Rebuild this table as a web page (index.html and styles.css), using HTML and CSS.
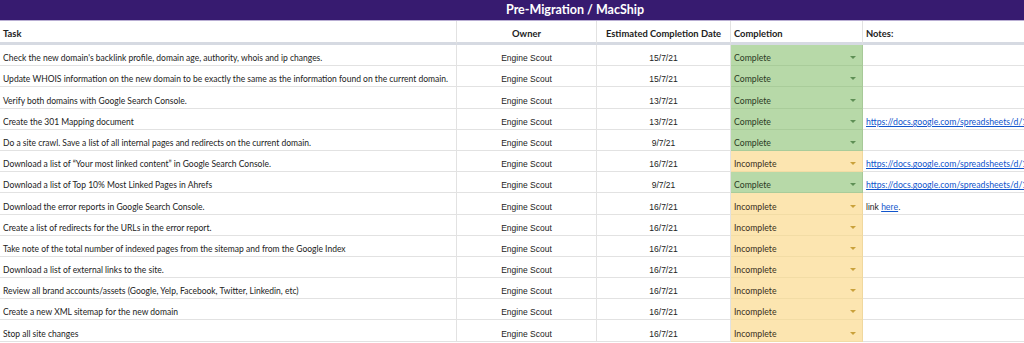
FILE: index.html
```html
<!DOCTYPE html>
<html>
<head>
<meta charset="utf-8">
<link rel="stylesheet" href="styles.css">
</head>
<body>
<div class="sheet">
  <div class="title">Pre-Migration / MacShip</div>
  <div class="grid">
    <div class="hd task">Task</div>
    <div class="hd center">Owner</div>
    <div class="hd center">Estimated Completion Date</div>
    <div class="hd">Completion</div>
    <div class="hd note">Notes:</div>

    <div class="c task">Check the new domain's backlink profile, domain age, authority, whois and ip changes.</div>
    <div class="c center ar">Engine Scout</div><div class="c center ar">15/7/21</div>
    <div class="c st ok">Complete<span class="dd"></span></div><div class="c note"></div>

    <div class="c task">Update WHOIS information on the new domain to be exactly the same as the information found on the current domain.</div>
    <div class="c center ar">Engine Scout</div><div class="c center ar">15/7/21</div>
    <div class="c st ok">Complete<span class="dd"></span></div><div class="c note"></div>

    <div class="c task">Verify both domains with Google Search Console.</div>
    <div class="c center ar">Engine Scout</div><div class="c center ar">13/7/21</div>
    <div class="c st ok">Complete<span class="dd"></span></div><div class="c note"></div>

    <div class="c task">Create the 301 Mapping document</div>
    <div class="c center ar">Engine Scout</div><div class="c center ar">13/7/21</div>
    <div class="c st ok">Complete<span class="dd"></span></div><div class="c note"><a href="#">https://docs.google.com/spreadsheets/d/1</a></div>

    <div class="c task">Do a site crawl. Save a list of all internal pages and redirects on the current domain.</div>
    <div class="c center ar">Engine Scout</div><div class="c center ar">9/7/21</div>
    <div class="c st ok">Complete<span class="dd"></span></div><div class="c note"></div>

    <div class="c task">Download a list of “Your most linked content” in Google Search Console.</div>
    <div class="c center ar">Engine Scout</div><div class="c center ar">16/7/21</div>
    <div class="c st no">Incomplete<span class="dd"></span></div><div class="c note"><a href="#">https://docs.google.com/spreadsheets/d/1</a></div>

    <div class="c task">Download a list of Top 10% Most Linked Pages in Ahrefs</div>
    <div class="c center ar">Engine Scout</div><div class="c center ar">9/7/21</div>
    <div class="c st ok">Complete<span class="dd"></span></div><div class="c note"><a href="#">https://docs.google.com/spreadsheets/d/1</a></div>

    <div class="c task">Download the error reports in Google Search Console.</div>
    <div class="c center ar">Engine Scout</div><div class="c center ar">16/7/21</div>
    <div class="c st no">Incomplete<span class="dd"></span></div><div class="c note ar">link&nbsp;<a href="#">here</a>.</div>

    <div class="c task">Create a list of redirects for the URLs in the error report.</div>
    <div class="c center ar">Engine Scout</div><div class="c center ar">16/7/21</div>
    <div class="c st no">Incomplete<span class="dd"></span></div><div class="c note"></div>

    <div class="c task">Take note of the total number of indexed pages from the sitemap and from the Google Index</div>
    <div class="c center ar">Engine Scout</div><div class="c center ar">16/7/21</div>
    <div class="c st no">Incomplete<span class="dd"></span></div><div class="c note"></div>

    <div class="c task">Download a list of external links to the site.</div>
    <div class="c center ar">Engine Scout</div><div class="c center ar">16/7/21</div>
    <div class="c st no">Incomplete<span class="dd"></span></div><div class="c note"></div>

    <div class="c task">Review all brand accounts/assets (Google, Yelp, Facebook, Twitter, Linkedin, etc)</div>
    <div class="c center ar">Engine Scout</div><div class="c center ar">16/7/21</div>
    <div class="c st no">Incomplete<span class="dd"></span></div><div class="c note"></div>

    <div class="c task">Create a new XML sitemap for the new domain</div>
    <div class="c center ar">Engine Scout</div><div class="c center ar">16/7/21</div>
    <div class="c st no">Incomplete<span class="dd"></span></div><div class="c note"></div>

    <div class="c task">Stop all site changes</div>
    <div class="c center ar">Engine Scout</div><div class="c center ar">16/7/21</div>
    <div class="c st no">Incomplete<span class="dd"></span></div><div class="c note"></div>
  </div>
</div>
</body>
</html>
```

FILE: styles.css
```css
html, body { margin: 0; padding: 0; background: #fff; }
body { font-family: "Lato", "Open Sans", sans-serif; color: #222; overflow: hidden; }
.sheet { width: 1024px; }
.title {
  height: 20px;
  background: #371b70;
  border-bottom: 1px solid #b9aed3;
  color: #fff;
  font-weight: 700;
  font-size: 12.5px;
  line-height: 20px;
  padding-left: 506px;
  white-space: nowrap;
}
.grid {
  display: grid;
  grid-template-columns: 457px 140px 134px 132px 161px;
  grid-template-rows: 24px repeat(14, 21.2px);
}
.hd {
  font-weight: 700;
  font-size: 9.4px;
  padding: 0 3px 3px;
  display: flex;
  align-items: flex-end;
  border-right: 1px solid #e2e2e2;
  border-bottom: 3px solid #d6dae2;
  white-space: nowrap;
  box-sizing: border-box;
  overflow: hidden;
}
.hd.center { justify-content: center; }
.c {
  font-size: 8.7px;
  padding: 0 3px 2px;
  display: flex;
  align-items: flex-end;
  border-right: 1px solid #e2e2e2;
  border-bottom: 1px solid #e2e2e2;
  white-space: nowrap;
  overflow: hidden;
  box-sizing: border-box;
  position: relative;
}
.c.task { font-size: 8.5px; }
.c.center { justify-content: center; }
.ar { font-family: "Liberation Sans", Arial, sans-serif; font-size: 8.5px; }
.st { padding-left: 3px; }
.st.ok { background: #b7d9a8; border-right-color: #a7c998; border-bottom-color: #a9cc9a; color: #2a3a24; }
.st.no { background: #fce5b0; border-right-color: #f0d89e; border-bottom-color: #f2dca5; color: #3a3020; }
.dd {
  position: absolute;
  right: 6px;
  bottom: 6px;
  width: 0; height: 0;
  border-left: 3px solid transparent;
  border-right: 3px solid transparent;
  border-top: 3px solid #5e8f55;
}
.st.no .dd { border-top-color: #c9a13b; }
.note { border-right: none; padding-left: 3px; }
.note a { color: #1155cc; text-decoration: underline; font-family: "Lato", sans-serif; font-size: 8.7px; }
.note.ar a { font-family: "Liberation Sans", Arial, sans-serif; font-size: 8.5px; }
```
